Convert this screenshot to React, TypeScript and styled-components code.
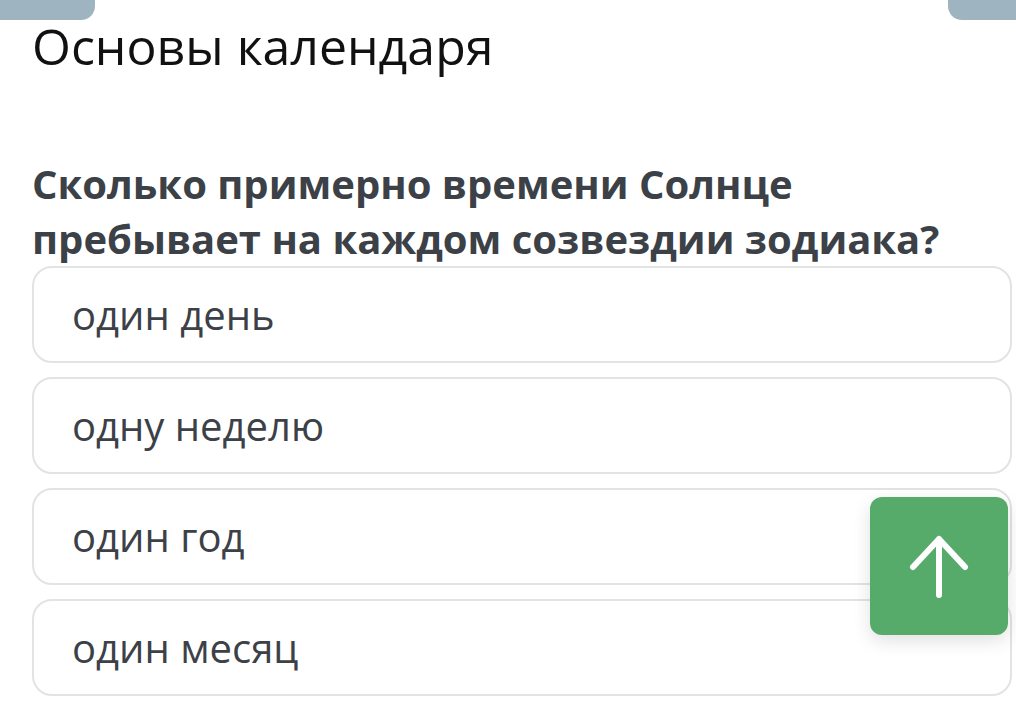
import { FC } from 'react'
import styled, { createGlobalStyle } from 'styled-components'

const GlobalStyle = createGlobalStyle`
  body {
    margin: 0;
    background: #ffffff;
    font-family: 'Open Sans', 'Noto Sans', sans-serif;
  }
`

const Page = styled.div`
  position: relative;
  width: 1016px;
  height: 718px;
  overflow: hidden;
  background: #ffffff;
`

const TopBar = styled.div`
  display: flex;
  justify-content: space-between;
  height: 20px;
`

const Tab = styled.div<{ side: 'left' | 'right' }>`
  width: ${(p) => (p.side === 'left' ? '95px' : '68px')};
  height: 20px;
  background: #9fb4c1;
  border-bottom-${(p) => (p.side === 'left' ? 'right' : 'left')}-radius: 14px;
`

const Content = styled.div`
  padding: 0 4px 0 32px;
`

const Title = styled.h1`
  margin: -2px 0 0;
  font-weight: 400;
  font-size: 50px;
  line-height: 56px;
  color: #111111;
`

const Question = styled.h2`
  margin: 82px 0 0;
  font-weight: 700;
  font-size: 40px;
  line-height: 55px;
  color: #3c4148;
`

const Options = styled.div`
  display: flex;
  flex-direction: column;
  gap: 14px;
`

const Option = styled.div`
  box-sizing: border-box;
  height: 97px;
  display: flex;
  align-items: center;
  padding: 0 0 1px 38px;
  border: 2px solid #e2e3e4;
  border-radius: 20px;
  font-size: 40px;
  color: #3c4148;
`

const UpButton = styled.button`
  position: absolute;
  left: 870px;
  top: 497px;
  width: 138px;
  height: 138px;
  border: none;
  border-radius: 12px;
  background: #57ab6a;
  box-shadow: 0 6px 18px rgba(0, 0, 0, 0.12);
  display: flex;
  align-items: center;
  justify-content: center;
  padding: 0;
`

const answers = ['один день', 'одну неделю', 'один год', 'один месяц']

const App: FC = () => (
  <Page>
    <GlobalStyle />
    <TopBar>
      <Tab side="left" />
      <Tab side="right" />
    </TopBar>
    <Content>
      <Title>Основы календаря</Title>
      <Question>
        Сколько примерно времени Солнце
        <br />
        пребывает на каждом созвездии зодиака?
      </Question>
      <Options>
        {answers.map((a) => (
          <Option key={a}>{a}</Option>
        ))}
      </Options>
    </Content>
    <UpButton aria-label="Наверх">
      <svg width="70" height="70" viewBox="0 0 70 70" fill="none">
        <path
          d="M35 64 V8 M9 36 L35 8 L61 36"
          stroke="#ffffff"
          strokeWidth="6"
          strokeLinecap="round"
          strokeLinejoin="round"
        />
      </svg>
    </UpButton>
  </Page>
)

export default App
